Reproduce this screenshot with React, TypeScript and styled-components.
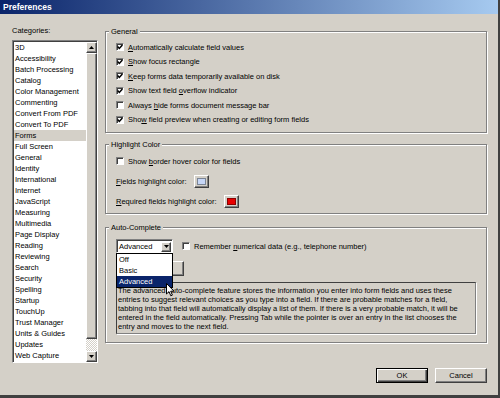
import React from "react";
import styled, { createGlobalStyle, css } from "styled-components";

const FACE = "#d4d0c8";
const SHADOW = "#808080";
const DARK = "#404040";

const GlobalStyle = createGlobalStyle`
  html, body { margin: 0; padding: 0; background: ${FACE}; }
  body { font-family: "Liberation Sans", Arial, sans-serif; }
  * { box-sizing: border-box; }
`;

const raised = css`
  background: ${FACE};
  border: 1px solid;
  border-color: #fff ${DARK} ${DARK} #fff;
  box-shadow: inset -1px -1px 0 ${SHADOW};
`;

const sunken = css`
  border: 1px solid;
  border-color: ${SHADOW} #fff #fff ${SHADOW};
  box-shadow: inset 1px 1px 0 ${DARK};
`;

const Window = styled.div`
  width: 500px;
  height: 398px;
  display: flex;
  flex-direction: column;
  background: ${FACE};
  border-right: 2px solid ${DARK};
  border-bottom: 3px solid ${DARK};
  font-size: 7.5px;
  line-height: 9px;
  color: #000;
`;

const TitleBar = styled.div`
  height: 14px;
  flex: none;
  padding-left: 3px;
  background: linear-gradient(90deg, #0a246a 0%, #a6caf0 100%);
  color: #fff;
  font-weight: bold;
  font-size: 8.5px;
  line-height: 14px;
`;

const Body = styled.div`
  display: grid;
  grid-template-columns: 86px 382px;
  column-gap: 7px;
  align-items: start;
  padding: 12px 0 0 12px;
`;

const Column = styled.div`
  display: flex;
  flex-direction: column;
`;

const RightColumn = styled(Column)`
  padding-top: 5px;
`;

const ListBox = styled.div`
  ${sunken};
  margin-top: 5px;
  height: 323px;
  display: flex;
  background: #fff;
  padding: 1px 0 0 1px;
`;

const Items = styled.div`
  flex: 1;
  overflow: hidden;
`;

const Item = styled.div<{ $selected?: boolean }>`
  height: 11px;
  line-height: 11px;
  padding-left: 1px;
  white-space: nowrap;
  background: ${(p) => (p.$selected ? FACE : "transparent")};
`;

const ScrollBar = styled.div`
  width: 11px;
  display: flex;
  flex-direction: column;
  background-color: #fff;
  background-image: repeating-conic-gradient(${FACE} 0 25%, #fff 0 50%);
  background-size: 2px 2px;
`;

const ScrollButton = styled.div<{ $size: number }>`
  ${raised};
  height: ${(p) => p.$size}px;
  flex: none;
  display: grid;
  place-items: center;
`;

const Track = styled.div`
  flex: 1;
`;

const Group = styled.section<{ $top: number; $pt: number; $pb: number }>`
  position: relative;
  margin-top: ${(p) => p.$top}px;
  padding: ${(p) => p.$pt}px 10px ${(p) => p.$pb}px 10px;
  border: 1px solid ${SHADOW};
  box-shadow: inset 1px 1px 0 #fff, 1px 1px 0 #fff;
`;

const GroupTitle = styled.span`
  position: absolute;
  top: -5px;
  left: 3px;
  padding: 0 2px;
  background: ${FACE};
  line-height: 9px;
`;

const Row = styled.div<{ $h: number; $gap?: number }>`
  display: flex;
  align-items: center;
  height: ${(p) => p.$h}px;
  gap: ${(p) => p.$gap ?? 4}px;
  white-space: nowrap;
`;

const Box = styled.span`
  ${sunken};
  width: 8px;
  height: 8px;
  flex: none;
  background: #fff;
  display: grid;
  place-items: center;
`;

const SwatchButton = styled.span`
  ${raised};
  width: 15px;
  height: 13px;
  margin-left: 4px;
  display: grid;
  place-items: center;
`;

const Chip = styled.span<{ $fill: string; $edge: string }>`
  width: 9px;
  height: 7px;
  background: ${(p) => p.$fill};
  border: 1px solid ${(p) => p.$edge};
`;

const SelectWrap = styled.div`
  position: relative;
  width: 57px;
  height: 14px;
`;

const Select = styled.div`
  ${sunken};
  height: 100%;
  background: #fff;
  display: flex;
  align-items: center;
  justify-content: space-between;
  padding: 1px 1px 0 2px;
`;

const DropButton = styled.span`
  ${raised};
  width: 10px;
  height: 10px;
  display: grid;
  place-items: center;
`;

const DropList = styled.div`
  position: absolute;
  top: 100%;
  left: 0;
  width: 100%;
  z-index: 2;
  background: #fff;
  border: 1px solid #000;
`;

const DropItem = styled.div<{ $active?: boolean }>`
  height: 11px;
  line-height: 11px;
  padding-left: 2px;
  background: ${(p) => (p.$active ? "#0a246a" : "#fff")};
  color: ${(p) => (p.$active ? "#fff" : "#000")};
`;

const PushButton = styled.button<{ $w: number; $h: number; $default?: boolean }>`
  ${raised};
  width: ${(p) => p.$w}px;
  height: ${(p) => p.$h}px;
  padding: 0;
  font: inherit;
  color: #000;
  ${(p) =>
    p.$default &&
    css`
      border: 1px solid #000;
      box-shadow: inset 1px 1px 0 #fff, inset -1px -1px 0 ${DARK}, inset -2px -2px 0 ${SHADOW};
    `}
`;

const Description = styled.div`
  margin-top: 6px;
  height: 52px;
  padding: 3px 0 0 1px;
  border: 1px solid;
  border-color: ${DARK} ${SHADOW} ${SHADOW} ${DARK};
  box-shadow: 1px 1px 0 #fff;
`;

const Line = styled.div`
  white-space: nowrap;
  line-height: 9px;
`;

const Cursor = styled.svg`
  position: absolute;
  left: 60px;
  top: 55px;
  z-index: 3;
`;

const Footer = styled.div`
  display: flex;
  justify-content: flex-end;
  gap: 7px;
  margin-top: 5px;
  padding-right: 11px;
`;

const categories = [
  "3D", "Accessibility", "Batch Processing", "Catalog", "Color Management", "Commenting",
  "Convert From PDF", "Convert To PDF", "Forms", "Full Screen", "General", "Identity",
  "International", "Internet", "JavaScript", "Measuring", "Multimedia", "Page Display",
  "Reading", "Reviewing", "Search", "Security", "Spelling", "Startup", "TouchUp",
  "Trust Manager", "Units & Guides", "Updates", "Web Capture",
];

const generalOptions = [
  { label: "&Automatically calculate field values", checked: true },
  { label: "&Show focus rectangle", checked: true },
  { label: "&Keep forms data temporarily available on disk", checked: true },
  { label: "Show text field &overflow indicator", checked: true },
  { label: "Always &hide forms document message bar", checked: false },
  { label: "Sho&w field preview when creating or editing form fields", checked: true },
];

const description = [
  "The advanced auto-complete feature stores the information you enter into form fields and uses these",
  "entries to suggest relevant choices as you type into a field. If there are probable matches for a field,",
  "tabbing into that field will automatically display a list of them. If there is a very probable match, it will be",
  "entered in the field automatically. Pressing Tab while the pointer is over an entry in the list chooses the",
  "entry and moves to the next field.",
];

// "&x" marks the access key, as in Windows resource strings
const Mnemonic = ({ text }: { text: string }) => {
  const i = text.indexOf("&");
  if (i < 0) return <>{text}</>;
  return (
    <>
      {text.slice(0, i)}
      <u>{text[i + 1]}</u>
      {text.slice(i + 2)}
    </>
  );
};

const Triangle = ({ up }: { up?: boolean }) => (
  <svg width="5" height="3" viewBox="0 0 5 3">
    <path d={up ? "M0 3 L2.5 0 L5 3 Z" : "M0 0 L5 0 L2.5 3 Z"} fill="#000" />
  </svg>
);

const CheckBox = ({ checked }: { checked: boolean }) => (
  <Box>
    {checked && (
      <svg width="6" height="6" viewBox="0 0 6 6">
        <path d="M0.6 2.6 L2.3 4.4 L5.4 0.9" stroke="#000" strokeWidth="1.5" fill="none" />
      </svg>
    )}
  </Box>
);

const App = () => {
  return (
    <>
      <GlobalStyle />
      <Window>
        <TitleBar>Preferences</TitleBar>
        <Body>
          <Column>
            <span>Categories:</span>
            <ListBox>
              <Items>
                {categories.map((c) => (
                  <Item key={c} $selected={c === "Forms"}>
                    {c}
                  </Item>
                ))}
              </Items>
              <ScrollBar>
                <ScrollButton $size={11}>
                  <Triangle up />
                </ScrollButton>
                <ScrollButton $size={286} />
                <Track />
                <ScrollButton $size={11}>
                  <Triangle />
                </ScrollButton>
              </ScrollBar>
            </ListBox>
          </Column>

          <RightColumn>
            <Group $top={0} $pt={8} $pb={5}>
              <GroupTitle>General</GroupTitle>
              {generalOptions.map((o) => (
                <Row key={o.label} $h={14.5}>
                  <CheckBox checked={o.checked} />
                  <span>
                    <Mnemonic text={o.label} />
                  </span>
                </Row>
              ))}
            </Group>

            <Group $top={11} $pt={6} $pb={2}>
              <GroupTitle>Highlight Color</GroupTitle>
              <Row $h={20}>
                <CheckBox checked={false} />
                <span>
                  <Mnemonic text="Show &border hover color for fields" />
                </span>
              </Row>
              <Row $h={20}>
                <span>
                  <Mnemonic text="&Fields highlight color:" />
                </span>
                <SwatchButton>
                  <Chip $fill="#c6d6f6" $edge="#7a8494" />
                </SwatchButton>
              </Row>
              <Row $h={20}>
                <span>
                  <Mnemonic text="&Required fields highlight color:" />
                </span>
                <SwatchButton>
                  <Chip $fill="#e80000" $edge="#8a0000" />
                </SwatchButton>
              </Row>
            </Group>

            <Group $top={13} $pt={11} $pb={8}>
              <GroupTitle>Auto-Complete</GroupTitle>
              <Row $h={14} $gap={9}>
                <SelectWrap>
                  <Select>
                    <span>Advanced</span>
                    <DropButton>
                      <Triangle />
                    </DropButton>
                  </Select>
                  <DropList>
                    <DropItem>Off</DropItem>
                    <DropItem>Basic</DropItem>
                    <DropItem $active>Advanced</DropItem>
                  </DropList>
                </SelectWrap>
                <Row $h={14}>
                  <CheckBox checked={false} />
                  <span>
                    <Mnemonic text="Remember &numerical data (e.g., telephone number)" />
                  </span>
                </Row>
              </Row>
              <Row $h={15} style={{ marginTop: 8 }}>
                <PushButton $w={68} $h={15} aria-label="Edit list" />
              </Row>
              <Description>
                {description.map((l) => (
                  <Line key={l}>{l}</Line>
                ))}
              </Description>
              <Cursor width="9" height="14" viewBox="0 0 9 14">
                <path
                  d="M0.5 0.5 V11 L3 8.6 L4.8 12.8 L6.4 12.1 L4.7 8.2 H8 Z"
                  fill="#fff"
                  stroke="#000"
                  strokeWidth="1"
                />
              </Cursor>
            </Group>
          </RightColumn>
        </Body>

        <Footer>
          <PushButton $w={52} $h={15} $default>
            OK
          </PushButton>
          <PushButton $w={52} $h={15}>
            Cancel
          </PushButton>
        </Footer>
      </Window>
    </>
  );
};

export default App;
